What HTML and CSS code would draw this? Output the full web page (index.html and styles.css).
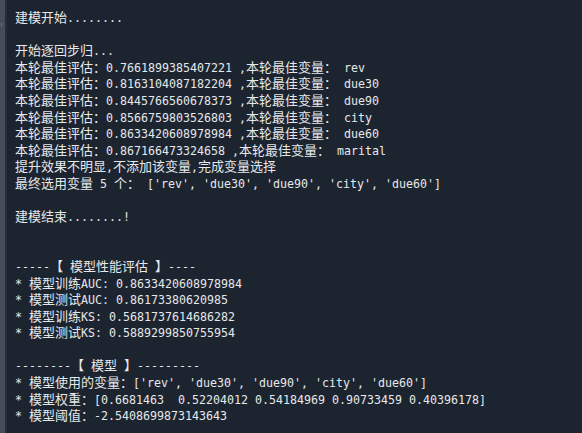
FILE: index.html
```html
<!DOCTYPE html>
<html>
<head>
<meta charset="utf-8">
<link rel="stylesheet" href="styles.css">
</head>
<body>
<div class="frame">
  <div class="gutter"><span class="tick"></span></div>
  <div class="sep"></div>
  <div class="out">
    <div class="l"><span class="c">建模开始</span>........</div>
    <div class="l"> </div>
    <div class="l"><span class="c">开始逐回步归</span>...</div>
    <div class="l"><span class="c">本轮最佳评估：</span>0.7661899385407221 ,<span class="c">本轮最佳变量：</span> rev</div>
    <div class="l"><span class="c">本轮最佳评估：</span>0.8163104087182204 ,<span class="c">本轮最佳变量：</span> due30</div>
    <div class="l"><span class="c">本轮最佳评估：</span>0.8445766560678373 ,<span class="c">本轮最佳变量：</span> due90</div>
    <div class="l"><span class="c">本轮最佳评估：</span>0.8566759803526803 ,<span class="c">本轮最佳变量：</span> city</div>
    <div class="l"><span class="c">本轮最佳评估：</span>0.8633420608978984 ,<span class="c">本轮最佳变量：</span> due60</div>
    <div class="l"><span class="c">本轮最佳评估：</span>0.867166473324658 ,<span class="c">本轮最佳变量：</span> marital</div>
    <div class="l"><span class="c">提升效果不明显</span>,<span class="c">不添加该变量</span>,<span class="c">完成变量选择</span></div>
    <div class="l"><span class="c">最终选用变量</span> 5 <span class="c">个：</span> ['rev', 'due30', 'due90', 'city', 'due60']</div>
    <div class="l"> </div>
    <div class="l"><span class="c">建模结束</span>........!</div>
    <div class="l"> </div>
    <div class="l"> </div>
    <div class="l">-----<span class="c">【</span> <span class="c">模型性能评估</span> <span class="c">】</span>----</div>
    <div class="l">* <span class="c">模型训练</span>AUC: 0.8633420608978984</div>
    <div class="l">* <span class="c">模型测试</span>AUC: 0.86173380620985</div>
    <div class="l">* <span class="c">模型训练</span>KS: 0.5681737614686282</div>
    <div class="l">* <span class="c">模型测试</span>KS: 0.5889299850755954</div>
    <div class="l"> </div>
    <div class="l">--------<span class="c">【</span> <span class="c">模型</span> <span class="c">】</span>---------</div>
    <div class="l">* <span class="c">模型使用的变量：</span>['rev', 'due30', 'due90', 'city', 'due60']</div>
    <div class="l">* <span class="c">模型权重：</span>[0.6681463  0.52204012 0.54184969 0.90733459 0.40396178]</div>
    <div class="l">* <span class="c">模型阈值：</span>-2.5408699873143643</div>
  </div>
</div>
</body>
</html>
```
FILE: styles.css
```css
html, body {
  margin: 0;
  padding: 0;
  background: #1c2430;
  height: 100%;
  overflow: hidden;
}
.frame {
  display: flex;
  height: 433px;
}
.gutter {
  width: 5px;
  background: #444d59;
  position: relative;
}
.tick {
  position: absolute;
  left: 1px;
  top: 23px;
  width: 1px;
  height: 3px;
  background: #6a7380;
}
.sep {
  width: 2px;
  background: #252d38;
}
.out {
  flex: 1;
  padding: 9px 0 0 8px;
  color: #e6e8ea;
  font-family: "DejaVu Sans Mono", monospace;
  font-size: 11.63px;
}
.l {
  height: 16.6px;
  line-height: 16.6px;
  white-space: pre;
}
.c {
  font-family: "Noto Sans CJK SC", sans-serif;
  font-size: 13px;
}
```
